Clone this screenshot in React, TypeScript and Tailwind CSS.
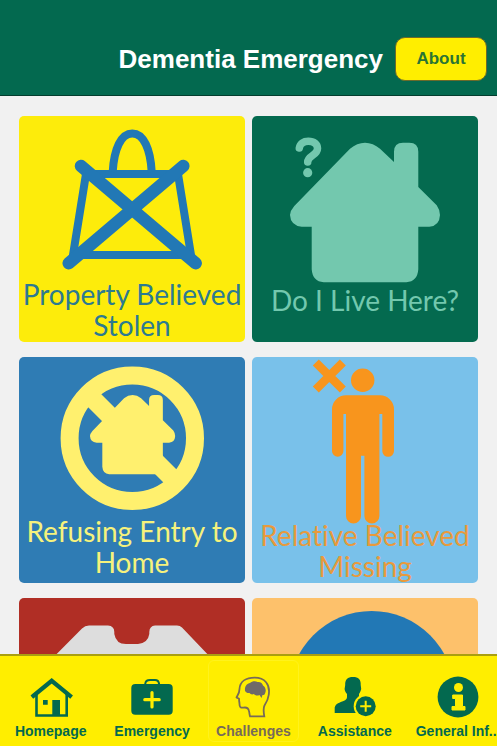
import type { ReactNode } from "react";

const HOUSE =
  "M98 32.7Q105 26.7 113 26.7Q121 26.7 128 32.7L142 46V35.7Q142 26.7 151 26.7H157.3Q166.3 26.7 166.3 35.7V71L184.7 89.3Q188 94 188 99Q187.500 110 177.300 110.700H166.300V153.300Q165.500 165.500 154.300 166.300H71.700Q60.500 165.500 59.700 153.300V110.700H49.700Q38.500 109.500 38 99Q38.300 94.500 42.300 90Z";

function StolenBag() {
  return (
    <svg viewBox="0 0 226 163" className="block w-full overflow-visible" fill="none" stroke="#2278b5" aria-hidden="true">
      <path d="M67 58H159L172 139H54Z" strokeWidth="8" />
      <path d="M93.700 56C95 33 102 17.500 113.300 17.500S131.500 33 132.700 56" strokeWidth="8" />
      <path d="M62 50L176.700 147.300M164.300 50L49.700 147.300" strokeWidth="12.500" strokeLinecap="round" />
    </svg>
  );
}

function HouseQuestion() {
  return (
    <svg viewBox="0 0 226 169" className="block w-full overflow-visible" fill="#73c8ae" aria-hidden="true">
      <path d={HOUSE} />
      <path
        d="M47.300 32C48 27.500 51.500 25.200 56.300 25.200C62 25.200 65.500 28 65.500 32.500C65.500 39.500 55.700 39.500 55.700 46"
        fill="none"
        stroke="#73c8ae"
        strokeWidth="7.500"
        strokeLinecap="round"
      />
      <circle cx="55.700" cy="56.700" r="4.600" />
    </svg>
  );
}

function NoEntryHouse() {
  return (
    <svg viewBox="0 0 226 159" className="block w-full overflow-visible" fill="#fff06e" aria-hidden="true">
      <circle cx="113.300" cy="81.300" r="62.700" fill="none" stroke="#fff06e" strokeWidth="18" />
      <path d="M72 40L154.500 122.500" stroke="#fff06e" strokeWidth="18.500" />
      <path d={HOUSE} transform="translate(49.400 22.800) scale(.568)" />
    </svg>
  );
}

function MissingPerson() {
  return (
    <svg viewBox="0 0 226 163" className="block w-full overflow-visible" fill="#f8951d" aria-hidden="true">
      <path d="M63.800 5.500L90.800 32.500M90.800 5.500L63.800 32.500" stroke="#f8951d" strokeWidth="8.500" />
      <circle cx="110.700" cy="23.300" r="11.700" />
      <path d="M94 38.300H128A14 14 0 0 1 142 52.300V94A5.800 5.800 0 0 1 130.300 94V57H127.400V159A7.500 7.500 0 0 1 112.400 159V98.700H109V159A7.500 7.500 0 0 1 94 159V57H91.400V94A5.700 5.700 0 0 1 80 94V52.300A14 14 0 0 1 94 38.300Z" />
    </svg>
  );
}

function NotchedPlate() {
  return (
    <svg viewBox="0 0 226 226" className="block w-full" aria-hidden="true">
      <path
        fill="#dddddd"
        d="M37.700 56L63 30.500Q66 27.500 70 27.500H89Q95.300 28 95.300 34V36Q97 46 107 46H119Q129 45 130.300 36V34Q130.500 28 136 27.500H158Q161 27.500 163 29.500L188.300 56V170H37.700Z"
      />
    </svg>
  );
}

function BlueDisc() {
  return (
    <svg viewBox="0 0 226 226" className="block w-full" aria-hidden="true">
      <circle cx="119.700" cy="95.600" r="82.600" fill="#2278b5" />
    </svg>
  );
}

function Tile({ className, label, name, children }: { className: string; label?: string; name?: string; children: ReactNode }) {
  return (
    <button
      type="button"
      aria-label={name}
      className={`flex aspect-square flex-col items-stretch overflow-hidden rounded-[5px] text-center font-['Lato',sans-serif] text-[28px] leading-[31px] [font-variant-ligatures:none] ${className}`}
    >
      {children}
      {label && <span>{label}</span>}
    </button>
  );
}

const ICON = "block size-[42px] shrink-0 overflow-visible";

function HomeIcon() {
  return (
    <svg viewBox="0 0 42 42" className={ICON} fill="none" stroke="currentColor" aria-hidden="true">
      <path d="M3.500 18.700L21.700 3.800L40 18.700" strokeWidth="4.200" strokeLinecap="square" />
      <path d="M6.500 17V38.500H36.700V17" strokeWidth="2.600" />
      <path d="M13 23H17.700V27.700H13ZM22.300 23H30V38.700H22.300Z" fill="currentColor" stroke="none" />
    </svg>
  );
}

function KitIcon() {
  return (
    <svg viewBox="0 0 42 42" className={ICON} fill="none" aria-hidden="true">
      <rect x=".3" y="7" width="41.400" height="30.700" rx="4" fill="currentColor" />
      <path d="M14.300 8V6.500Q14.700 3 19 3H24Q27.500 3 28 6.500V8" stroke="currentColor" strokeWidth="2" />
      <path d="M21 15.500V29.900M13.800 22.700H28.200" stroke="#ffee00" strokeWidth="3.200" strokeLinecap="round" />
    </svg>
  );
}

function BrainIcon() {
  return (
    <svg viewBox="0 0 42 42" className={ICON} fill="none" aria-hidden="true">
      <path
        d="M32.300 39.300C31.500 35 31 31.500 32.500 28.500C34.500 25.500 36.200 22 36.700 18C38.500 7 32.500 .7 22.700 .7C14 .7 8 4.500 7.500 12C7.500 16 6 17.500 4.500 20.300C5 21.300 7 21 7.200 22C6.800 23.500 7.500 25 7.500 27C7.500 30 8.500 31 11.500 30.600C15 30 16.500 31.500 17 34C17.500 36 17.500 38 18 39.300Z"
        stroke="currentColor"
        strokeWidth="1.800"
      />
      <path
        d="M13 14C12.500 9 15 6.500 18 6C20 4 23.500 3.700 25.500 5C28.500 4.500 30.500 6.500 31 8.500C34 10.500 34.300 14 33 16.500C32.500 18 31.500 18.200 30.500 18L29.500 21L27.500 18C25 19 23 18.500 22 17C20 18 18.500 17.300 17.500 16C15.500 16.300 14 15.500 13 14Z"
        fill="#6f6a68"
      />
    </svg>
  );
}

function AssistIcon() {
  return (
    <svg viewBox="0 0 42 42" className={ICON} fill="currentColor" aria-hidden="true">
      <path d="M19 0C24.500 0 27 2.500 26.700 8L27.200 12C26.800 14 26.200 15 25 17V22L37 28V36H.7V30.500C1.500 26.500 6 25.500 9.500 24C12 22.800 13 22 13 20V17C11.500 15 10.800 14 10.600 12L11.200 8C11 2.500 13.500 0 19 0Z" />
      <circle cx="31.700" cy="29.300" r="12" fill="#ffee00" />
      <circle cx="31.700" cy="29.300" r="10" />
      <path d="M31.700 23.800V34.800M26.200 29.300H37.200" stroke="#ffee00" strokeWidth="2" />
    </svg>
  );
}

function InfoIcon() {
  return (
    <svg viewBox="-2 0 42 42" className={ICON} aria-hidden="true">
      <circle cx="21" cy="20" r="20.400" fill="currentColor" />
      <circle cx="21.500" cy="10.500" r="4.500" fill="#ffee00" />
      <path
        d="M15.700 18H25.500V29.500H28V33H15V29.500H18.500V21.500H15.700Z"
        fill="#ffee00"
        stroke="#ffee00"
        strokeLinejoin="round"
      />
    </svg>
  );
}

function Tab({ label, active, children }: { label: string; active?: boolean; children: ReactNode }) {
  return (
    <a
      href="#"
      aria-current={active ? "page" : undefined}
      className={`flex w-[20.400%] shrink-0 flex-col items-center px-[5px] py-1 ${active ? "text-[#776b58]" : "text-[#03694f]"}`}
    >
      <span
        className={`flex w-full flex-1 flex-col items-center gap-1 rounded-md border pt-4 ${active ? "border-[#fff21c]" : "border-transparent"}`}
      >
        {children}
        <span className="text-[14px] leading-4 font-bold whitespace-nowrap">{label}</span>
      </span>
    </a>
  );
}

export default function App() {
  return (
    <div className="flex h-screen flex-col overflow-hidden bg-[#f1f1f1] font-['Liberation_Sans',Arial,sans-serif]">
      <header className="flex shrink-0 items-center justify-end gap-3 border-b border-[#033d2e] bg-[#03694f] pt-[37px] pr-[10px] pb-[14px]">
        <h1 className="text-[26px] leading-8 font-bold whitespace-nowrap text-white">Dementia Emergency</h1>
        <button
          type="button"
          className="h-11 w-[92px] rounded-[10px] border border-[#6c6a2a] bg-[#ffee00] text-[17px] font-bold text-[#2a7434]"
        >
          About
        </button>
      </header>

      <main className="min-h-0 flex-1 overflow-y-auto px-[19px] py-5 [scrollbar-width:none]">
        <div className="grid grid-cols-2 gap-x-[7px] gap-y-[15px]">
          <Tile className="bg-[#fdec0b] text-[#2c7a91]" label="Property Believed Stolen">
            <StolenBag />
          </Tile>
          <Tile className="bg-[#046a4f] text-[#73c8ae]" label="Do I Live Here?">
            <HouseQuestion />
          </Tile>
          <Tile className="bg-[#2f7cb4] text-[#f6f27c]" label="Refusing Entry to Home">
            <NoEntryHouse />
          </Tile>
          <Tile className="bg-[#79c1ea] text-[#e89a3c]" label="Relative Believed Missing">
            <MissingPerson />
          </Tile>
          <Tile className="bg-[#b02e25]" name="Challenge 5">
            <NotchedPlate />
          </Tile>
          <Tile className="bg-[#fdc16b]" name="Challenge 6">
            <BlueDisc />
          </Tile>
        </div>
      </main>

      <nav className="flex h-[92px] shrink-0 overflow-hidden border-t-2 border-[#aa9f10] bg-[#ffee00]">
        <Tab label="Homepage">
          <HomeIcon />
        </Tab>
        <Tab label="Emergency">
          <KitIcon />
        </Tab>
        <Tab label="Challenges" active>
          <BrainIcon />
        </Tab>
        <Tab label="Assistance">
          <AssistIcon />
        </Tab>
        <Tab label="General Inf..">
          <InfoIcon />
        </Tab>
      </nav>
    </div>
  );
}
